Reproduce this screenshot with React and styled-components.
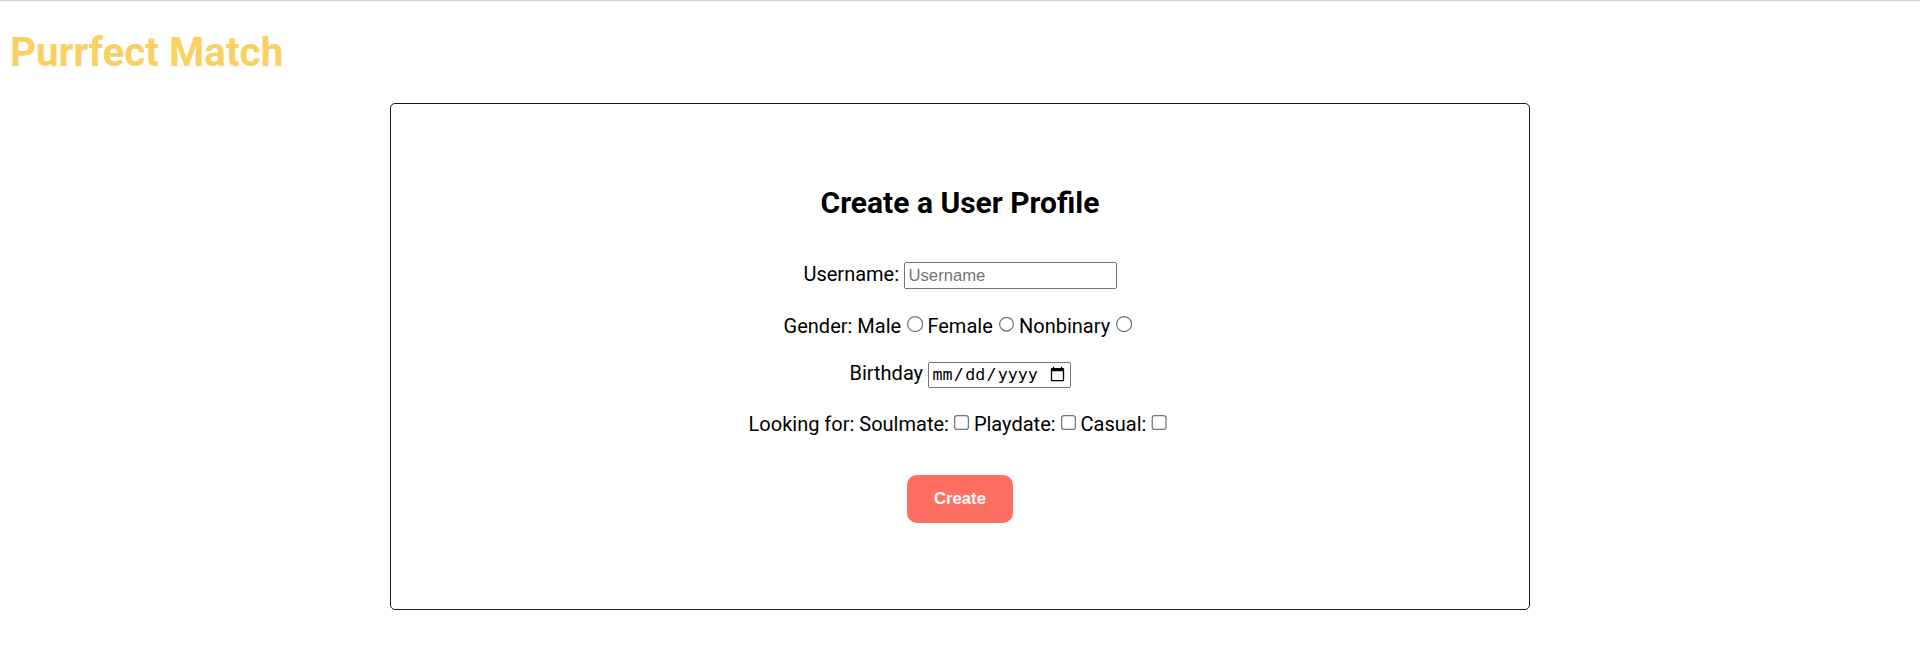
import React from "react";
import styled, { createGlobalStyle } from "styled-components";

const GlobalStyle = createGlobalStyle`
  html, body {
    margin: 0;
    padding: 0;
    background: #ffffff;
  }
  body {
    border-top: 1px solid #cfcfcf;
    font-family: Roboto, "Liberation Sans", Arial, sans-serif;
    color: #000000;
  }
`;

const Page = styled.div`
  zoom: 1.25;
  padding: 0 8px;
`;

const Title = styled.h1`
  margin: 22px 0 22px;
  font-size: 32.3px;
  font-weight: 700;
  line-height: normal;
  color: #f9d162;
`;

const Card = styled.section`
  box-sizing: border-box;
  width: 60%;
  margin: 0 auto;
  padding: 65px 20px 69px;
  border: 1px solid #1a1a1a;
  border-radius: 4px;
  text-align: center;
`;

const Heading = styled.h2`
  margin: 0 0 33px;
  font-size: 24px;
  font-weight: 700;
  line-height: normal;
`;

const Form = styled.form`
  display: flex;
  flex-direction: column;
  align-items: center;
  gap: 19px;
`;

const Row = styled.div`
  font-size: 16px;
  line-height: normal;
`;

const TextInput = styled.input`
  box-sizing: border-box;
  width: 170px;
`;

const DateInput = styled.input`
  box-sizing: border-box;
  width: 114px;
`;

const Button = styled.button`
  margin-top: 12px;
  padding: 11px 22px;
  border: none;
  border-radius: 8px;
  background: #ff6f61;
  color: #ffffff;
  font-family: "Liberation Sans", Arial, sans-serif;
  font-size: 13.333px;
  font-weight: 700;
  line-height: normal;
  cursor: pointer;
`;

export default function App() {
  return (
    <>
      <GlobalStyle />
      <Page>
        <Title>Purrfect Match</Title>
        <Card>
          <Heading>Create a User Profile</Heading>
          <Form onSubmit={(e) => e.preventDefault()}>
            <Row>
              Username: <TextInput type="text" placeholder="Username" />
            </Row>
            <Row>
              {"Gender: Male"}
              <input type="radio" name="gender" />
              {"Female"}
              <input type="radio" name="gender" />
              {"Nonbinary"}
              <input type="radio" name="gender" />
            </Row>
            <Row>
              Birthday <DateInput type="date" />
            </Row>
            <Row>
              {"Looking for: Soulmate:"}
              <input type="checkbox" />
              {"Playdate:"}
              <input type="checkbox" />
              {"Casual:"}
              <input type="checkbox" />
            </Row>
            <Button type="submit">Create</Button>
          </Form>
        </Card>
      </Page>
    </>
  );
}
